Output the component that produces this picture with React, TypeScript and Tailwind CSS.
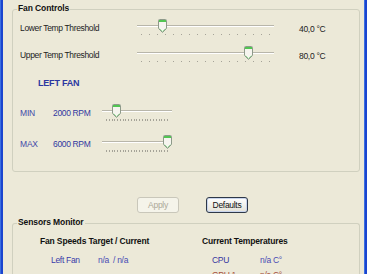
import React from 'react';

const font = { fontFamily: '"Liberation Sans", Arial, sans-serif' };

const Thumb = () => (
  <svg width="9" height="14" viewBox="0 0 9 14">
    <path
      d="M0.5 1.5 Q0.5 0.5 1.5 0.5 H7.5 Q8.5 0.5 8.5 1.5 V9.5 L4.5 13.5 L0.5 9.5 Z"
      fill="#F6F5EF"
      stroke="#8E9A8A"
    />
    <rect x="1" y="1" width="7" height="2" fill="#52C552" />
    <path d="M1.5 9.5 L4.5 12.5 L7.5 9.5" fill="none" stroke="#9ADB9A" />
  </svg>
);

type SliderProps = {
  className: string;
  pos: number; // 0..1
  travel: number;
  ticks: number;
  dense?: boolean;
};

const Slider = ({ className, pos, travel, ticks, dense }: SliderProps) => (
  <div className={`relative h-[20px] shrink-0 ${className}`}>
    <div className="absolute left-0 right-0 top-[6px] h-[2px] border-t border-[#B8B6AA] border-b border-b-white" />
    <div className="absolute left-0 right-0 top-[15px] flex justify-between px-[4px]">
      {Array.from({ length: ticks }).map((_, i) => (
        <span
          key={i}
          className={`w-[1px] bg-[#A5A398] ${dense ? 'h-[2px]' : 'h-[1px]'}`}
        />
      ))}
    </div>
    <div className="absolute top-0" style={{ left: Math.round(pos * travel) }}>
      <Thumb />
    </div>
  </div>
);

const GroupBox = ({ title, children, className }: { title: string; children?: React.ReactNode; className: string }) => (
  <div className={`ml-[9px] mr-[4px] border border-[#D0D0BF] rounded-[3px] ${className}`}>
    <div className="-mt-[7px] ml-[4px] w-fit px-[1px] bg-[#ECE9D8] text-[8.5px] leading-[11px] font-bold tracking-[-0.1px] text-[#111]">
      {title}
    </div>
    {children}
  </div>
);

const TempRow = ({ label, value, pos, className }: { label: string; value: string; pos: number; className: string }) => (
  <div className={`flex items-start pl-[7px] ${className}`}>
    <span className="w-[117px] mt-[4px] text-[8.5px] leading-[11px] tracking-[-0.35px] text-[#222]">{label}</span>
    <Slider className="w-[137px]" pos={pos} travel={128} ticks={17} />
    <span className="ml-[25px] mt-[5px] text-[8.5px] leading-[11px] tracking-[-0.3px] text-[#222]">{value}</span>
  </div>
);

const FanRow = ({ label, rpm, pos, className }: { label: string; rpm: string; pos: number; className: string }) => (
  <div className={`flex items-start pl-[7px] ${className}`}>
    <span className="w-[33px] mt-[4px] text-[8.5px] leading-[11px] tracking-[-0.2px] text-[#4248A8]">{label}</span>
    <span className="w-[49px] mt-[4px] text-[8.5px] leading-[11px] tracking-[-0.35px] text-[#3038A0]">{rpm}</span>
    <Slider className="w-[70px]" pos={pos} travel={61} ticks={23} dense />
  </div>
);

export default function App() {
  const tempPos = (v: number) => (v - 30) / 60;
  const rpmPos = (v: number) => (v - 1200) / 4800;

  return (
    <div className="flex w-[367px] h-[274px] overflow-hidden bg-[#ECE9D8]" style={font}>
      <div className="flex shrink-0">
        <div className="w-[1px] bg-[#3C6FE0]" />
        <div className="w-[2px] bg-[#1A45CF]" />
      </div>

      <div className="flex-1 flex flex-col">
        <GroupBox title="Fan Controls" className="mt-[9px] h-[163px] shrink-0">
          <TempRow label="Lower Temp Threshold" value="40,0 °C" pos={tempPos(40)} className="mt-[5px]" />
          <TempRow label="Upper Temp Threshold" value="80,0 °C" pos={tempPos(80)} className="mt-[7px]" />

          <div className="mt-[12px] pl-[25px] text-[9px] leading-[11px] font-bold tracking-[-0.2px] text-[#2B36A0]">
            LEFT FAN
          </div>

          <FanRow label="MIN" rpm="2000 RPM" pos={rpmPos(2000)} className="mt-[15px]" />
          <FanRow label="MAX" rpm="6000 RPM" pos={rpmPos(6000)} className="mt-[11px]" />
        </GroupBox>

        <div className="flex shrink-0 mt-[25px] pl-[134px] gap-[27px]">
          <button
            disabled
            className="w-[42px] h-[16px] rounded-[3px] border border-[#C9C7BA] bg-[#F5F4EA] text-[8.5px] leading-[14px] tracking-[-0.3px] text-[#ACA899]"
          >
            Apply
          </button>
          <button className="w-[42px] h-[16px] rounded-[3px] border border-[#2E3848] bg-gradient-to-b from-white to-[#E4E2D8] text-[8.5px] leading-[14px] tracking-[-0.3px] text-[#111] shadow-[inset_0_0_0_1px_#C8D4EC]">
            Defaults
          </button>
        </div>

        <GroupBox title="Sensors Monitor" className="mt-[10px] flex-1 rounded-b-none border-b-0">
          <div className="flex mt-[8px] pl-[27px]">
            <div className="w-[162px]">
              <div className="text-[8.5px] leading-[11px] font-bold tracking-[-0.15px] text-[#111]">
                Fan Speeds Target / Current
              </div>
              <div className="flex mt-[8px] pl-[11px] text-[8.5px] leading-[11px] tracking-[-0.3px]">
                <span className="w-[47px] text-[#3A3AAA]">Left Fan</span>
                <span className="text-[#4A4AB4]">n/a&nbsp;&nbsp;/&nbsp;n/a</span>
              </div>
            </div>
            <div>
              <div className="text-[8.5px] leading-[11px] font-bold tracking-[-0.15px] text-[#111]">
                Current Temperatures
              </div>
              <div className="flex mt-[8px] pl-[10px] text-[8.5px] leading-[11px] tracking-[-0.3px]">
                <span className="w-[48px] text-[#3535A0]">CPU</span>
                <span className="text-[#4A4AB4]">n/a C°</span>
              </div>
              <div className="flex mt-[4px] pl-[10px] text-[8.5px] leading-[11px] tracking-[-0.3px]">
                <span className="w-[48px] text-[#A5503C]">GPU 1</span>
                <span className="text-[#A5503C]">n/a C°</span>
              </div>
            </div>
          </div>
        </GroupBox>
      </div>

      <div className="flex shrink-0">
        <div className="w-[1px] bg-[#3C6FE0]" />
        <div className="w-[2px] bg-[#1A45CF]" />
      </div>
    </div>
  );
}
